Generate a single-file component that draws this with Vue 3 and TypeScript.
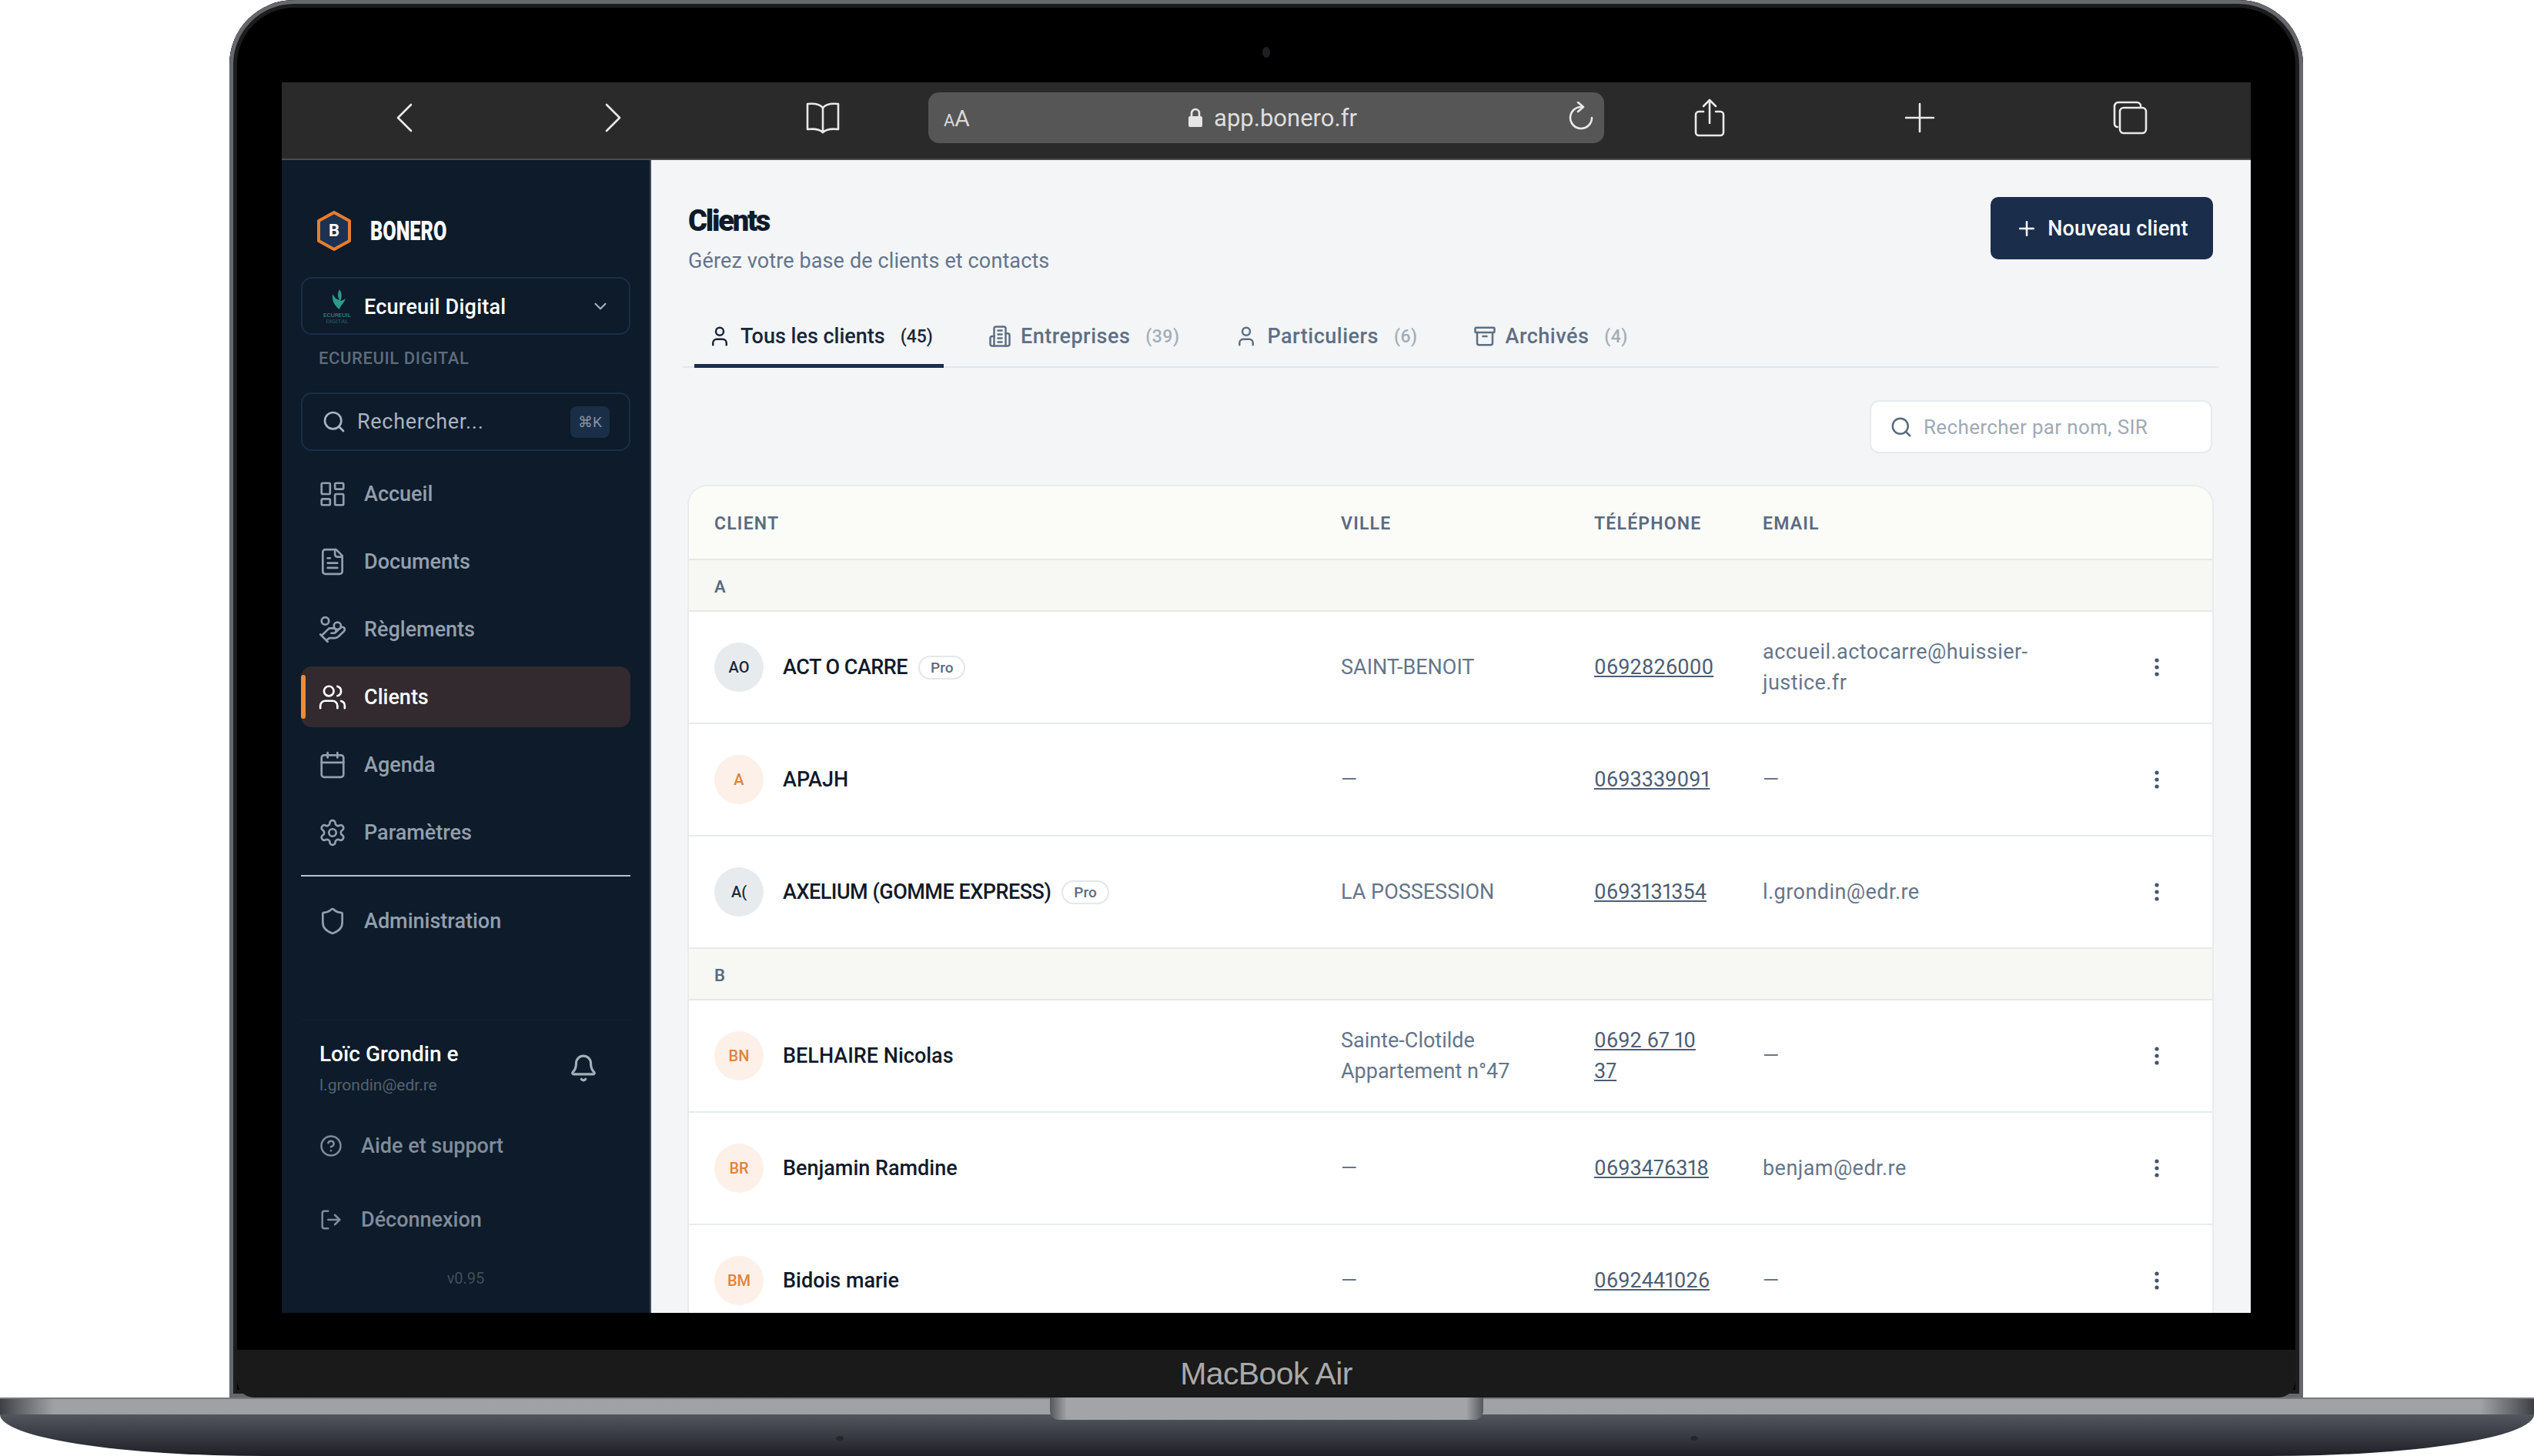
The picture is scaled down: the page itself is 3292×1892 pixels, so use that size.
<script setup lang="ts">
type Client = {
  initials: string
  name: string
  pro?: boolean
  grey?: boolean
  city: string[]
  phone: string
  email: string
}

const icons: Record<string, string[]> = {
  home: [
    'M4 3h5a1 1 0 0 1 1 1v7a1 1 0 0 1-1 1H4a1 1 0 0 1-1-1V4a1 1 0 0 1 1-1z',
    'M15 3h5a1 1 0 0 1 1 1v3a1 1 0 0 1-1 1h-5a1 1 0 0 1-1-1V4a1 1 0 0 1 1-1z',
    'M15 12h5a1 1 0 0 1 1 1v7a1 1 0 0 1-1 1h-5a1 1 0 0 1-1-1v-7a1 1 0 0 1 1-1z',
    'M4 16h5a1 1 0 0 1 1 1v3a1 1 0 0 1-1 1H4a1 1 0 0 1-1-1v-3a1 1 0 0 1 1-1z',
  ],
  file: [
    'M15 2H6a2 2 0 0 0-2 2v16a2 2 0 0 0 2 2h12a2 2 0 0 0 2-2V7z',
    'M14 2v4a2 2 0 0 0 2 2h4',
    'M10 9H8',
    'M16 13H8',
    'M16 17H8',
  ],
  coins: [
    'M11 15h2a2 2 0 1 0 0-4h-3c-.6 0-1.1.2-1.4.6L3 17',
    'm7 21 1.6-1.4c.3-.4.8-.6 1.4-.6h4c1.1 0 2.1-.4 2.8-1.2l4.6-4.4a2 2 0 0 0-2.75-2.91l-4.2 3.9',
    'm2 16 6 6',
    'M18.9 9a2.9 2.9 0 1 1-5.8 0 2.9 2.9 0 0 1 5.8 0z',
    'M9 5a3 3 0 1 1-6 0 3 3 0 0 1 6 0z',
  ],
  users: [
    'M16 21v-2a4 4 0 0 0-4-4H6a4 4 0 0 0-4 4v2',
    'M16 3.128a4 4 0 0 1 0 7.744',
    'M22 21v-2a4 4 0 0 0-3-3.87',
    'M13 7a4 4 0 1 1-8 0 4 4 0 0 1 8 0z',
  ],
  calendar: [
    'M8 2v4',
    'M16 2v4',
    'M5 4h14a2 2 0 0 1 2 2v14a2 2 0 0 1-2 2H5a2 2 0 0 1-2-2V6a2 2 0 0 1 2-2z',
    'M3 10h18',
  ],
  gear: [
    'M12.22 2h-.44a2 2 0 0 0-2 2v.18a2 2 0 0 1-1 1.73l-.43.25a2 2 0 0 1-2 0l-.15-.08a2 2 0 0 0-2.73.73l-.22.38a2 2 0 0 0 .73 2.73l.15.1a2 2 0 0 1 1 1.72v.51a2 2 0 0 1-1 1.74l-.15.09a2 2 0 0 0-.73 2.73l.22.38a2 2 0 0 0 2.73.73l.15-.08a2 2 0 0 1 2 0l.43.25a2 2 0 0 1 1 1.73V20a2 2 0 0 0 2 2h.44a2 2 0 0 0 2-2v-.18a2 2 0 0 1 1-1.73l.43-.25a2 2 0 0 1 2 0l.15.08a2 2 0 0 0 2.73-.73l.22-.39a2 2 0 0 0-.73-2.73l-.15-.08a2 2 0 0 1-1-1.74v-.5a2 2 0 0 1 1-1.74l.15-.09a2 2 0 0 0 .73-2.73l-.22-.38a2 2 0 0 0-2.73-.73l-.15.08a2 2 0 0 1-2 0l-.43-.25a2 2 0 0 1-1-1.73V4a2 2 0 0 0-2-2z',
    'M15 12a3 3 0 1 1-6 0 3 3 0 0 1 6 0z',
  ],
  shield: [
    'M20 13c0 5-3.5 7.5-7.66 8.95a1 1 0 0 1-.67-.01C7.5 20.5 4 18 4 13V6a1 1 0 0 1 1-1c2 0 4.5-1.2 6.24-2.72a1.17 1.17 0 0 1 1.52 0C14.51 3.81 17 5 19 5a1 1 0 0 1 1 1z',
  ],
  bell: [
    'M10.268 21a2 2 0 0 0 3.464 0',
    'M3.262 15.326A1 1 0 0 0 4 17h16a1 1 0 0 0 .74-1.673C19.41 13.956 18 12.499 18 8A6 6 0 0 0 6 8c0 4.499-1.411 5.956-2.738 7.326',
  ],
  help: [
    'M22 12a10 10 0 1 1-20 0 10 10 0 0 1 20 0z',
    'M9.09 9a3 3 0 0 1 5.83 1c0 2-3 3-3 3',
    'M12 17h.01',
  ],
  logout: ['M9 21H5a2 2 0 0 1-2-2V5a2 2 0 0 1 2-2h4', 'm16 17 5-5-5-5', 'M21 12H9'],
  user: ['M19 21v-2a4 4 0 0 0-4-4H9a4 4 0 0 0-4 4v2', 'M16 7a4 4 0 1 1-8 0 4 4 0 0 1 8 0z'],
  building: [
    'M6 22V4a2 2 0 0 1 2-2h8a2 2 0 0 1 2 2v18Z',
    'M6 12H4a2 2 0 0 0-2 2v6a2 2 0 0 0 2 2h2',
    'M18 9h2a2 2 0 0 1 2 2v9a2 2 0 0 1-2 2h-2',
    'M10 6h4',
    'M10 10h4',
    'M10 14h4',
    'M10 18h4',
  ],
  archive: [
    'M3 3h18a1 1 0 0 1 1 1v3a1 1 0 0 1-1 1H3a1 1 0 0 1-1-1V4a1 1 0 0 1 1-1z',
    'M4 8v11a2 2 0 0 0 2 2h12a2 2 0 0 0 2-2V8',
    'M10 12h4',
  ],
  search: ['m21 21-4.34-4.34', 'M19 11a8 8 0 1 1-16 0 8 8 0 0 1 16 0z'],
  chevron: ['m6 9 6 6 6-6'],
  plus: ['M5 12h14', 'M12 5v14'],
}

const nav = [
  { label: 'Accueil', icon: 'home' },
  { label: 'Documents', icon: 'file' },
  { label: 'Règlements', icon: 'coins' },
  { label: 'Clients', icon: 'users', active: true },
  { label: 'Agenda', icon: 'calendar' },
  { label: 'Paramètres', icon: 'gear' },
]

const tabs = [
  { label: 'Tous les clients', count: 45, icon: 'user', active: true },
  { label: 'Entreprises', count: 39, icon: 'building' },
  { label: 'Particuliers', count: 6, icon: 'user' },
  { label: 'Archivés', count: 4, icon: 'archive' },
]

const groups: { letter: string; clients: Client[] }[] = [
  {
    letter: 'A',
    clients: [
      { initials: 'AO', name: 'ACT O CARRE', pro: true, grey: true, city: ['SAINT-BENOIT'], phone: '0692826000', email: 'accueil.actocarre@huissier-justice.fr' },
      { initials: 'A', name: 'APAJH', city: ['—'], phone: '0693339091', email: '—' },
      { initials: 'A(', name: 'AXELIUM (GOMME EXPRESS)', pro: true, grey: true, city: ['LA POSSESSION'], phone: '0693131354', email: 'l.grondin@edr.re' },
    ],
  },
  {
    letter: 'B',
    clients: [
      { initials: 'BN', name: 'BELHAIRE Nicolas', city: ['Sainte-Clotilde', 'Appartement n°47'], phone: '0692 67 10 37', email: '—' },
      { initials: 'BR', name: 'Benjamin Ramdine', city: ['—'], phone: '0693476318', email: 'benjam@edr.re' },
      { initials: 'BM', name: 'Bidois marie', city: ['—'], phone: '0692441026', email: '—' },
    ],
  },
]
</script>

<template>
  <div class="page">
    <div class="lid">
      <span class="camera"></span>
      <div class="screen">
        <div class="safari">
          <div class="slot">
            <svg class="safari-ico" width="24" height="38" viewBox="0 0 24 38"><path d="M21 2 4 19l17 17" /></svg>
          </div>
          <div class="slot">
            <svg class="safari-ico" width="24" height="38" viewBox="0 0 24 38"><path d="m3 2 17 17L3 36" /></svg>
          </div>
          <div class="slot">
            <svg class="safari-ico" width="50" height="42" viewBox="0 0 50 42">
              <path d="M25 8C21 3 14 2 5 3v33c9-1 16 0 20 4 4-4 11-5 20-4V3c-9-1-16 0-20 5z" />
              <path d="M25 8v32" />
            </svg>
          </div>
          <div class="address">
            <span class="aa"><small>A</small>A</span>
            <span class="url">
              <svg width="20" height="26" viewBox="0 0 20 26">
                <path class="lock-shackle" d="M5 12V7a5 5 0 0 1 10 0v5" />
                <path class="lock-body" d="M3 11h14a2 2 0 0 1 2 2v10a2 2 0 0 1-2 2H3a2 2 0 0 1-2-2V13a2 2 0 0 1 2-2z" />
              </svg>
              app.bonero.fr
            </span>
            <svg class="safari-ico reload" width="36" height="40" viewBox="0 0 36 40">
              <path d="M19 7A14 14 0 1 0 32 21" />
              <path d="m14 1 7 6-7 6" />
            </svg>
          </div>
          <div class="slot">
            <svg class="safari-ico" width="40" height="50" viewBox="0 0 40 50">
              <path d="M12 17H6a4 4 0 0 0-4 4v23a4 4 0 0 0 4 4h28a4 4 0 0 0 4-4V21a4 4 0 0 0-4-4h-6" />
              <path d="M20 32V3" />
              <path d="m12 10 8-8 8 8" />
            </svg>
          </div>
          <div class="slot wide">
            <svg class="safari-ico" width="40" height="40" viewBox="0 0 40 40"><path d="M20 2v36M2 20h36" /></svg>
          </div>
          <div class="slot wide">
            <svg class="safari-ico" width="46" height="44" viewBox="0 0 46 44">
              <path d="M6 34a4 4 0 0 1-4-4V7a5 5 0 0 1 5-5h24a5 5 0 0 1 5 5" />
              <path d="M14 9h24a5 5 0 0 1 5 5v23a5 5 0 0 1-5 5H14a5 5 0 0 1-5-5V14a5 5 0 0 1 5-5z" />
            </svg>
          </div>
        </div>

        <div class="app">
          <aside class="sidebar">
            <div class="brand">
              <svg width="46" height="54" viewBox="0 0 46 54">
                <path class="hex" d="M23 3 43 14v26L23 51 3 40V14z" />
                <text x="23" y="34" class="hex-letter">B</text>
              </svg>
              <span class="brand-name">BONERO</span>
            </div>

            <div class="org">
              <svg class="org-logo" width="42" height="48" viewBox="0 0 42 48">
                <path class="leaf" d="M24 2c-3 6-2 10 0 14-4-1-7-4-9-8-1 8 2 15 9 20 1-5 6-8 8-14-3 2-5 3-7 3 2-4 3-9-1-15z" />
                <text x="21" y="38" class="org-small">ECUREUIL</text>
                <text x="21" y="46" class="org-small faded">DIGITAL</text>
              </svg>
              <span class="org-name">Ecureuil Digital</span>
              <svg class="ico org-chevron" viewBox="0 0 24 24"><path v-for="d in icons.chevron" :key="d" :d="d" /></svg>
            </div>
            <div class="org-label">ECUREUIL DIGITAL</div>

            <div class="side-search">
              <svg class="ico" viewBox="0 0 24 24"><path v-for="d in icons.search" :key="d" :d="d" /></svg>
              <span class="side-search-text">Rechercher...</span>
              <span class="kbd">⌘K</span>
            </div>

            <nav class="nav">
              <a v-for="item in nav" :key="item.label" class="nav-item" :class="{ active: item.active }">
                <svg class="ico" viewBox="0 0 24 24"><path v-for="d in icons[item.icon]" :key="d" :d="d" /></svg>
                {{ item.label }}
              </a>
            </nav>
            <div class="side-divider"></div>
            <a class="nav-item">
              <svg class="ico" viewBox="0 0 24 24"><path v-for="d in icons.shield" :key="d" :d="d" /></svg>
              Administration
            </a>

            <div class="side-footer">
              <div class="user">
                <div>
                  <div class="user-name">Loïc Grondin e</div>
                  <div class="user-mail">l.grondin@edr.re</div>
                </div>
                <svg class="ico bell" viewBox="0 0 24 24"><path v-for="d in icons.bell" :key="d" :d="d" /></svg>
              </div>
              <a class="foot-link first">
                <svg class="ico" viewBox="0 0 24 24"><path v-for="d in icons.help" :key="d" :d="d" /></svg>
                Aide et support
              </a>
              <a class="foot-link">
                <svg class="ico" viewBox="0 0 24 24"><path v-for="d in icons.logout" :key="d" :d="d" /></svg>
                Déconnexion
              </a>
              <div class="version">v0.95</div>
            </div>
          </aside>

          <main class="main">
            <header class="head">
              <div>
                <h1>Clients</h1>
                <p>Gérez votre base de clients et contacts</p>
              </div>
              <button class="new-btn">
                <svg class="ico" viewBox="0 0 24 24"><path v-for="d in icons.plus" :key="d" :d="d" /></svg>
                Nouveau client
              </button>
            </header>

            <div class="tabs">
              <div v-for="tab in tabs" :key="tab.label" class="tab" :class="{ active: tab.active }">
                <svg class="ico" viewBox="0 0 24 24"><path v-for="d in icons[tab.icon]" :key="d" :d="d" /></svg>
                <span>{{ tab.label }}</span>
                <span class="count">({{ tab.count }})</span>
              </div>
            </div>

            <div class="toolbar">
              <div class="search">
                <svg class="ico" viewBox="0 0 24 24"><path v-for="d in icons.search" :key="d" :d="d" /></svg>
                <span>Rechercher par nom, SIR</span>
              </div>
            </div>

            <section class="card">
              <div class="row-grid table-head">
                <span>CLIENT</span>
                <span>VILLE</span>
                <span>TÉLÉPHONE</span>
                <span>EMAIL</span>
                <span></span>
              </div>
              <template v-for="group in groups" :key="group.letter">
                <div class="group">{{ group.letter }}</div>
                <div v-for="c in group.clients" :key="c.name" class="row-grid client-row">
                  <div class="client">
                    <span class="avatar" :class="{ grey: c.grey }">{{ c.initials }}</span>
                    <span class="client-name" :class="{ caps: c.pro }">{{ c.name }}</span>
                    <span v-if="c.pro" class="pro">Pro</span>
                  </div>
                  <div class="muted">
                    <div v-for="line in c.city" :key="line">{{ line }}</div>
                  </div>
                  <div class="muted"><a class="phone">{{ c.phone }}</a></div>
                  <div class="muted email">{{ c.email }}</div>
                  <div class="dots">
                    <svg width="8" height="24" viewBox="0 0 8 24">
                      <circle cx="4" cy="3" r="2.6" />
                      <circle cx="4" cy="12" r="2.6" />
                      <circle cx="4" cy="21" r="2.6" />
                    </svg>
                  </div>
                </div>
              </template>
            </section>
          </main>
        </div>
      </div>
      <div class="chin">MacBook Air</div>
    </div>

    <div class="base">
      <div class="base-band"></div>
      <div class="base-body">
        <span class="mic left"></span>
        <span class="mic right"></span>
      </div>
      <div class="notch"></div>
    </div>
  </div>
</template>

<style>
html,
body {
  margin: 0;
  background: #fff;
}
</style>

<style scoped>
.page {
  width: 3292px;
  height: 1892px;
  overflow: hidden;
  background: #fff;
  font-family: Roboto, 'Liberation Sans', sans-serif;
}

/* laptop */
.lid {
  position: relative;
  box-sizing: border-box;
  width: 2694px;
  height: 1816px;
  margin-left: 298px;
  padding: 107px 68px 0;
  background: #000;
  border-radius: 84px 84px 0 0;
  box-shadow: inset 0 0 0 5px #66686c, inset 0 0 0 10px #1c1c1e;
  display: flex;
  flex-direction: column;
}

.camera {
  position: absolute;
  top: 61px;
  left: 1342px;
  width: 10px;
  height: 14px;
  border-radius: 50%;
  background: #1d1f22;
}

.screen {
  height: 1599px;
  display: flex;
  flex-direction: column;
  overflow: hidden;
  background: #f3f5f7;
}

.chin {
  height: 62px;
  margin: 48px -58px 0;
  border-radius: 0 0 22px 22px;
  background: #1a1a1a;
  color: #a9a9a9;
  font-family: 'Liberation Sans', Arial, sans-serif;
  font-size: 41px;
  letter-spacing: -0.6px;
  line-height: 62px;
  text-align: center;
}

.base {
  position: relative;
  height: 76px;
}

.base-band {
  height: 22px;
  border-top: 2px solid #77797d;
  box-sizing: border-box;
  background: linear-gradient(90deg, #3d3f45 0, #5b5d62 20px, #9fa1a5 70px, #a0a2a6 3222px, #5b5d62 3272px, #3d3f45 100%);
}

.base-body {
  position: relative;
  height: 54px;
  background: linear-gradient(180deg, #54565f 0%, #3c3e47 45%, #1f2026 100%);
  border-radius: 0 0 345px 345px / 0 0 54px 54px;
}

.mic {
  position: absolute;
  top: 28px;
  width: 10px;
  height: 6px;
  border-radius: 50%;
  background: #25262b;
}

.mic.left {
  left: 1086px;
}

.mic.right {
  left: 2196px;
}

.notch {
  position: absolute;
  top: 0;
  left: 1364px;
  width: 563px;
  height: 29px;
  border-radius: 0 0 12px 12px;
  background: linear-gradient(90deg, #55575c 0, #a2a4a8 22px, #a2a4a8 541px, #55575c 100%);
}

/* safari bar */
.safari {
  flex: none;
  box-sizing: border-box;
  height: 101px;
  padding: 0 0 7px 23px;
  display: flex;
  align-items: center;
  background: #2a2a2a;
  border-bottom: 2px solid #4c4c4c;
}

.slot {
  width: 272px;
  flex: none;
  display: flex;
  justify-content: center;
  align-items: center;
}

.slot.wide {
  width: 274px;
}

.safari-ico {
  fill: none;
  stroke: #e9e9e9;
  stroke-width: 2.6;
  stroke-linecap: round;
  stroke-linejoin: round;
}

.address {
  position: relative;
  flex: none;
  width: 878px;
  height: 66px;
  margin: 0 1px;
  border-radius: 14px;
  background: #565656;
  display: flex;
  align-items: center;
  justify-content: center;
}

.aa {
  position: absolute;
  left: 20px;
  color: #d9d9d9;
  font-size: 30px;
}

.aa small {
  font-size: 22px;
}

.url {
  margin-left: 16px;
  display: flex;
  align-items: center;
  gap: 14px;
  color: #dedede;
  font-size: 31px;
}

.lock-shackle {
  fill: none;
  stroke: #e6e6e6;
  stroke-width: 2.6;
}

.lock-body {
  fill: #e6e6e6;
}

.reload {
  position: absolute;
  right: 12px;
  top: 12px;
}

/* sidebar */
.app {
  flex: 1;
  min-height: 0;
  display: flex;
}

.sidebar {
  flex: none;
  box-sizing: border-box;
  width: 480px;
  padding: 67px 25px 33px;
  display: flex;
  flex-direction: column;
  background: #0d1b2a;
  border-right: 2px solid #3a4b5c;
}

.ico {
  width: 32px;
  height: 32px;
  flex: none;
  fill: none;
  stroke: currentColor;
  stroke-width: 2;
  stroke-linecap: round;
  stroke-linejoin: round;
}

.brand {
  height: 50px;
  display: flex;
  align-items: center;
  gap: 24px;
  padding-left: 20px;
}

.hex {
  fill: #1b3252;
  stroke: #e67e2e;
  stroke-width: 4;
  stroke-linejoin: round;
}

.hex-letter {
  fill: #fff;
  font-size: 22px;
  font-weight: 700;
  text-anchor: middle;
}

.brand-name {
  display: inline-block;
  color: #fff;
  font-size: 35px;
  font-weight: 900;
  transform: scaleX(0.72);
  transform-origin: left center;
}

.org {
  box-sizing: border-box;
  height: 75px;
  margin-top: 35px;
  padding: 0 24px 0 24px;
  display: flex;
  align-items: center;
  border: 2px solid #1c2e46;
  border-radius: 14px;
  color: #fff;
}

.org-logo {
  flex: none;
}

.leaf {
  fill: #2b9c8c;
}

.org-small {
  fill: #2b9c8c;
  font-size: 8px;
  text-anchor: middle;
}

.org-small.faded {
  fill: #2d5f66;
}

.org-name {
  flex: 1;
  margin-left: 14px;
  padding-top: 3px;
  font-size: 27px;
  font-weight: 500;
  letter-spacing: 0.25px;
}

.org-chevron {
  width: 26px;
  height: 26px;
  color: #a4b0bd;
}

.org-label {
  height: 24px;
  margin-top: 19px;
  padding-left: 23px;
  color: #5f6b7a;
  font-size: 22px;
  font-weight: 500;
  letter-spacing: 0.6px;
  line-height: 24px;
}

.side-search {
  box-sizing: border-box;
  height: 76px;
  margin-top: 32px;
  padding: 0 25px;
  display: flex;
  align-items: center;
  gap: 14px;
  border: 2px solid #1c2e46;
  border-radius: 14px;
  color: #a8b4c0;
}

.side-search-text {
  flex: 1;
  font-size: 27px;
  letter-spacing: 0.7px;
}

.kbd {
  width: 51px;
  height: 41px;
  border-radius: 8px;
  background: #1b2e48;
  color: #8593a3;
  font-size: 19px;
  line-height: 41px;
  text-align: center;
}

.nav {
  margin-top: 16px;
  display: flex;
  flex-direction: column;
  gap: 9px;
}

.nav-item {
  position: relative;
  box-sizing: border-box;
  height: 79px;
  padding-left: 22px;
  display: flex;
  align-items: center;
  gap: 22px;
  border-radius: 14px;
  color: #929fad;
  font-size: 27px;
  font-weight: 500;
}

.nav-item .ico {
  width: 38px;
  height: 38px;
  stroke-width: 1.7;
}

.nav-item.active {
  background: #322a2e;
  color: #fff;
}

.nav-item.active::before {
  content: '';
  position: absolute;
  left: 0;
  top: 11px;
  bottom: 11px;
  width: 6px;
  border-radius: 3px;
  background: #f08a33;
}

.side-divider {
  height: 2px;
  margin: 16px 0 18px;
  background: #b7c4d0;
}

.side-footer {
  margin-top: auto;
  padding-top: 21px;
  border-top: 1px solid #122234;
}

.user {
  height: 75px;
  padding: 3px 42px 0 24px;
  display: flex;
  justify-content: space-between;
  align-items: center;
}

.bell {
  width: 38px;
  height: 38px;
  color: #a4afbb;
}

.user-name {
  color: #fff;
  font-size: 28px;
  font-weight: 500;
  line-height: 40px;
}

.user-mail {
  margin-top: 5px;
  color: #55626f;
  font-size: 21px;
  line-height: 30px;
}

.foot-link {
  height: 60px;
  margin-top: 36px;
  padding-left: 24px;
  display: flex;
  align-items: center;
  gap: 24px;
  color: #7f8c9a;
  font-size: 27px;
  font-weight: 500;
}

.foot-link.first {
  margin-top: 34px;
}

.foot-link .ico {
  width: 30px;
  height: 30px;
}

.version {
  margin-top: 34px;
  color: #414e5c;
  font-size: 20px;
  line-height: 24px;
  text-align: center;
}

/* main */
.main {
  flex: 1;
  min-width: 0;
  padding: 48px 50px 0 49px;
  overflow: hidden;
}

.head {
  display: flex;
  justify-content: space-between;
  align-items: flex-start;
}

.head h1 {
  margin: 9px 0 0 -1px;
  color: #0f1a2a;
  font-size: 38px;
  font-weight: 900;
  letter-spacing: -2.2px;
  line-height: 44px;
}

.head p {
  margin: 12px 0 0 -1px;
  color: #64748b;
  font-size: 27px;
  letter-spacing: 0.12px;
  line-height: 36px;
}

.new-btn {
  box-sizing: border-box;
  width: 289px;
  height: 81px;
  margin-right: -1px;
  padding: 0;
  display: flex;
  align-items: center;
  justify-content: center;
  gap: 12px;
  border: none;
  border-radius: 10px;
  background: #1a2e4c;
  color: #fff;
  font: 500 27px Roboto, sans-serif;
  letter-spacing: 0.2px;
}

.new-btn .ico {
  width: 30px;
  height: 30px;
}

.tabs {
  margin: 44px -9px 0 -8px;
  padding-left: 15px;
  display: flex;
  gap: 40px;
  border-bottom: 2px solid #e3e6ea;
}

.tab {
  box-sizing: border-box;
  height: 77px;
  margin-bottom: -2px;
  padding: 0 14px 0 18px;
  display: flex;
  align-items: center;
  color: #5f6f83;
  font-size: 27px;
  font-weight: 500;
  letter-spacing: 0.5px;
  border-bottom: 5px solid transparent;
}

.tab .ico {
  width: 30px;
  height: 30px;
  margin-right: 12px;
}

.tab .count {
  margin-left: 20px;
  color: #a4adb9;
  font-size: 23px;
}

.tab.active {
  color: #1a2638;
  letter-spacing: 0;
  border-bottom-color: #1a2e4c;
}

.tab.active .count {
  color: #1a2638;
}

.toolbar {
  margin-top: 42px;
  display: flex;
  justify-content: flex-end;
}

.search {
  box-sizing: border-box;
  width: 445px;
  height: 69px;
  padding: 0 24px;
  display: flex;
  align-items: center;
  gap: 14px;
  border: 2px solid #e8eaee;
  border-radius: 12px;
  background: #fff;
  color: #a0a9b5;
  font-size: 26px;
  letter-spacing: 0.35px;
}

.search .ico {
  width: 30px;
  height: 30px;
  color: #5a6b80;
}

.card {
  margin-top: 43px;
  border-radius: 24px 24px 0 0;
  background: #fff;
  box-shadow: 0 0 0 2px #e9ebee;
  overflow: hidden;
}

.row-grid {
  display: grid;
  grid-template-columns: 814px 329px 219px 467px 1fr;
  align-items: center;
}

.row-grid > * {
  padding-left: 33px;
  padding-right: 33px;
}

.table-head {
  height: 96px;
  padding-top: 2px;
  box-sizing: border-box;
  background: #fbfbf8;
  border-bottom: 2px solid #e6e8ea;
  color: #5b6b80;
  font-size: 23px;
  font-weight: 600;
  letter-spacing: 1.2px;
}

.group {
  box-sizing: border-box;
  height: 67px;
  padding-left: 33px;
  background: #f7f7f3;
  border-bottom: 2px solid #e6e8ea;
  color: #5b6b80;
  font-size: 22px;
  font-weight: 600;
  line-height: 69px;
}

.client-row {
  height: 146px;
  box-sizing: border-box;
  border-bottom: 2px solid #e8ebee;
}

.client {
  display: flex;
  align-items: center;
}

.avatar {
  width: 64px;
  height: 64px;
  flex: none;
  border-radius: 50%;
  background: #fdf0e8;
  color: #e0823c;
  font-size: 20px;
  font-weight: 500;
  line-height: 64px;
  text-align: center;
}

.avatar.grey {
  background: #e8ebee;
  color: #1a2a40;
}

.client-name {
  margin-left: 25px;
  color: #111a2a;
  font-size: 27px;
  font-weight: 500;
}

.client-name.caps {
  letter-spacing: -0.5px;
}

.pro {
  box-sizing: border-box;
  height: 31px;
  margin-left: 14px;
  padding: 0 14px;
  border: 2px solid #e3e6ea;
  border-radius: 16px;
  color: #5b6b80;
  font-size: 19px;
  font-weight: 500;
  line-height: 27px;
}

.muted {
  color: #66758a;
  font-size: 27px;
  line-height: 40px;
}

.email {
  letter-spacing: 0.45px;
}

.phone {
  color: #4d5e75;
  text-decoration: underline;
  font-variant-numeric: proportional-nums;
}

.dots {
  padding-left: 74px;
  display: flex;
}

.dots circle {
  fill: #46556a;
}
</style>
